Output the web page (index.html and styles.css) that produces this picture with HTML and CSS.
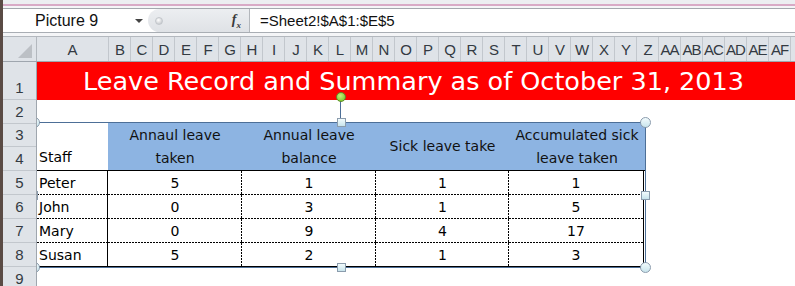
FILE: index.html
```html
<!DOCTYPE html>
<html lang="en">
<head>
    <meta charset="UTF-8">
    <title>Leave Record</title>
    <link rel="stylesheet" href="styles.css">
</head>
<body>
    <div class="app">
        <div class="ribbon-edge"></div>
        <div class="formula-bar">
            <div class="name-box">
                <span>Picture 9</span>
                <span class="caret"></span>
            </div>
            <div class="fx-zone">
                <span class="grip"></span>
                <span class="fx">f<sub>x</sub></span>
            </div>
            <div class="formula">=Sheet2!$A$1:$E$5</div>
        </div>
        <div class="sheet">
            <div class="col-heads">
                <div class="corner"><span class="corner-tri"></span></div>
                <div class="col col-a">A</div>
                <div class="col">B</div>
                <div class="col">C</div>
                <div class="col">D</div>
                <div class="col">E</div>
                <div class="col">F</div>
                <div class="col">G</div>
                <div class="col">H</div>
                <div class="col">I</div>
                <div class="col">J</div>
                <div class="col">K</div>
                <div class="col">L</div>
                <div class="col">M</div>
                <div class="col">N</div>
                <div class="col">O</div>
                <div class="col">P</div>
                <div class="col">Q</div>
                <div class="col">R</div>
                <div class="col">S</div>
                <div class="col">T</div>
                <div class="col">U</div>
                <div class="col">V</div>
                <div class="col">W</div>
                <div class="col">X</div>
                <div class="col">Y</div>
                <div class="col">Z</div>
                <div class="col">AA</div>
                <div class="col">AB</div>
                <div class="col">AC</div>
                <div class="col">AD</div>
                <div class="col">AE</div>
                <div class="col">AF</div>
                <div class="col"></div>
            </div>
            <div class="sheet-body">
                <div class="row-heads">
                    <div class="rh rh-1">1</div>
                    <div class="rh">2</div>
                    <div class="rh rh-3">3</div>
                    <div class="rh">4</div>
                    <div class="rh">5</div>
                    <div class="rh">6</div>
                    <div class="rh">7</div>
                    <div class="rh">8</div>
                    <div class="rh">9</div>
                </div>
                <div class="cells">
                    <div class="title-row">Leave Record and Summary as of October 31, 2013</div>

                    <div class="picture">
                        <div class="pic-table">
                            <div class="ph ph-staff">Staff</div>
                            <div class="ph ph-blue">Annaul leave<br>taken</div>
                            <div class="ph ph-blue">Annual leave<br>balance</div>
                            <div class="ph ph-blue">Sick leave take</div>
                            <div class="ph ph-blue">Accumulated sick<br>leave taken</div>

                            <div class="pc name d-b">Peter</div>
                            <div class="pc d-b d-r">5</div>
                            <div class="pc d-b d-r">1</div>
                            <div class="pc d-b d-r">1</div>
                            <div class="pc d-b end">1</div>

                            <div class="pc name d-b">John</div>
                            <div class="pc d-b d-r">0</div>
                            <div class="pc d-b d-r">3</div>
                            <div class="pc d-b d-r">1</div>
                            <div class="pc d-b end">5</div>

                            <div class="pc name d-b">Mary</div>
                            <div class="pc d-b d-r">0</div>
                            <div class="pc d-b d-r">9</div>
                            <div class="pc d-b d-r">4</div>
                            <div class="pc d-b end">17</div>

                            <div class="pc name last">Susan</div>
                            <div class="pc d-r last">5</div>
                            <div class="pc d-r last">2</div>
                            <div class="pc d-r last">1</div>
                            <div class="pc end last">3</div>
                        </div>

                        <span class="rotate-line"></span>
                        <span class="handle rotate"></span>
                        <span class="handle dot tl"></span>
                        <span class="handle dot tr"></span>
                        <span class="handle dot bl"></span>
                        <span class="handle dot br"></span>
                        <span class="handle sq tm"></span>
                        <span class="handle sq bm"></span>
                        <span class="handle sq ml"></span>
                        <span class="handle sq mr"></span>
                    </div>
                </div>
            </div>
        </div>
    </div>
</body>
</html>
```

FILE: styles.css
```css
* {
    box-sizing: border-box;
}
body {
    margin: 0;
    background-color: #ffffff;
}
.app {
    width: 795px;
    height: 286px;
    overflow: hidden;
    border-left: 3px solid #5a4b45;
    background-color: #f4f5f7;
    font-family: "Liberation Sans", Arial, sans-serif;
}
.ribbon-edge {
    height: 6px;
    margin-bottom: 2px;
    background-color: #eceef1;
    border-bottom: 2px solid #d8aac6;
}
.formula-bar {
    display: flex;
    height: 25px;
    border-top: 1px solid #a3a8ae;
    border-bottom: 1px solid #a9aeb4;
    background-color: #ffffff;
}
.name-box {
    width: 145px;
    display: flex;
    align-items: center;
    padding-left: 32px;
    padding-right: 5px;
    font-size: 16px;
    color: #111;
}
.caret {
    margin-left: auto;
    width: 0;
    height: 0;
    border-left: 4px solid transparent;
    border-right: 4px solid transparent;
    border-top: 4px solid #444;
}
.fx-zone {
    width: 102px;
    display: flex;
    align-items: center;
    justify-content: space-between;
    padding: 0 8px 0 7px;
    background: linear-gradient(#eceef1, #dfe2e6);
    border-radius: 12px 0 0 12px;
    border-right: 1px solid #b3b7bc;
}
.grip {
    width: 8px;
    height: 8px;
    border-radius: 50%;
    background: radial-gradient(circle at 40% 35%, #ffffff, #b8bcc1);
    border: 1px solid #c3c7cc;
}
.fx {
    font-family: "Liberation Serif", serif;
    font-style: italic;
    font-weight: bold;
    font-size: 14px;
    color: #3a3a3a;
}
.fx sub {
    font-size: 9px;
}
.formula {
    flex: 1;
    display: flex;
    align-items: center;
    padding-left: 10px;
    font-size: 15px;
    color: #111;
}
.sheet {
    margin-top: 3px;
    background-color: #ffffff;
}
.col-heads {
    display: flex;
    height: 26px;
    border-top: 1px solid #b3b8be;
    border-bottom: 1px solid #9fa6ae;
    background-color: #dfe3e8;
    color: #333a42;
    font-size: 15px;
}
.corner {
    flex: 0 0 34px;
    display: flex;
    justify-content: flex-end;
    align-items: flex-end;
    padding: 0 4px 3px 0;
    border-right: 1px solid #b3b8be;
}
.corner-tri {
    width: 14px;
    height: 14px;
    background-color: #bcc0c5;
    clip-path: polygon(100% 0, 100% 100%, 0 100%);
}
.col {
    flex: 0 0 22px;
    display: flex;
    align-items: center;
    justify-content: center;
    border-right: 1px solid #c2c7cd;
    white-space: nowrap;
    letter-spacing: -1px;
}
.col-a {
    flex-basis: 72px;
    letter-spacing: 0;
}
.sheet-body {
    display: flex;
}
.row-heads {
    flex: 0 0 34px;
    background-color: #dfe3e8;
    border-right: 1px solid #9fa6ae;
    color: #333a42;
    font-size: 15px;
}
.rh {
    height: 24px;
    display: flex;
    align-items: flex-end;
    justify-content: center;
    line-height: 23px;
    border-bottom: 1px solid #c2c7cd;
}
.rh-1 {
    height: 38px;
}
.rh-3 {
    height: 23px;
}
.cells {
    position: relative;
    flex: 1;
    height: 230px;
    overflow: hidden;
}
.title-row {
    height: 38px;
    width: 758px;
    padding-right: 5px;
    background-color: #ff0000;
    color: #ffffff;
    font-family: "DejaVu Sans", Verdana, sans-serif;
    font-size: 25.5px;
    line-height: 38px;
    text-align: center;
    white-space: nowrap;
}
.picture {
    position: absolute;
    left: -1px;
    top: 60px;
    width: 610px;
    height: 146px;
    border: 1px solid #4d6f97;
    background-color: #ffffff;
}
.pic-table {
    display: grid;
    grid-template-columns: 71px 134px 134px 133px 136px;
    grid-template-rows: 48px repeat(4, 24px);
    font-family: "DejaVu Sans", Verdana, sans-serif;
    font-size: 14px;
    color: #000;
}
.ph {
    display: flex;
    align-items: center;
    justify-content: center;
    text-align: center;
    line-height: 23px;
    border-bottom: 1px solid #000;
}
.ph-staff {
    justify-content: flex-start;
    align-items: flex-end;
    padding-left: 2px;
    padding-bottom: 1px;
    background-color: #ffffff;
}
.ph-blue {
    background-color: #8db4e2;
    color: #111;
}
.pc {
    --hb: none;
    --vr: none;
    display: flex;
    align-items: center;
    justify-content: center;
    line-height: 24px;
    background-image: var(--hb), var(--vr);
    background-size: 100% 1px, 1px 100%;
    background-position: left bottom, right top;
    background-repeat: no-repeat;
}
.pc.name {
    justify-content: flex-start;
    padding-left: 2px;
    border-right: 1px solid #000;
}
.pc.end {
    border-right: 1px solid #000;
    margin-right: 1px;
}
.pc.last {
    border-bottom: 1px solid #000;
}
.d-b {
    --hb: repeating-linear-gradient(90deg, #000 0 2px, transparent 2px 3px);
}
.d-r {
    --vr: repeating-linear-gradient(180deg, #000 0 2px, transparent 2px 3px);
}
.handle {
    position: absolute;
    background: linear-gradient(#f2fbfd, #c8e4ec);
    border: 1px solid #8b9cad;
}
.dot {
    width: 11px;
    height: 11px;
    border-radius: 50%;
}
.sq {
    width: 9px;
    height: 9px;
}
.tl {
    left: -8px;
    top: -6px;
}
.tr {
    right: -6px;
    top: -6px;
}
.bl {
    left: -8px;
    bottom: -6px;
}
.br {
    right: -6px;
    bottom: -6px;
}
.tm {
    top: -5px;
    left: calc(50% - 4px);
}
.bm {
    bottom: -5px;
    left: calc(50% - 4px);
}
.ml {
    left: -8px;
    top: calc(50% - 4px);
}
.mr {
    right: -5px;
    top: calc(50% - 4px);
}
.rotate {
    width: 10px;
    height: 10px;
    top: -31px;
    left: calc(50% - 5px);
    border-radius: 50%;
    background: radial-gradient(circle at 40% 35%, #c8f07a, #6cbf1f);
    border: 1px solid #5b8f2a;
}
.rotate-line {
    position: absolute;
    top: -22px;
    left: calc(50% - 1px);
    width: 1px;
    height: 18px;
    background-color: #4d6f97;
}
```
